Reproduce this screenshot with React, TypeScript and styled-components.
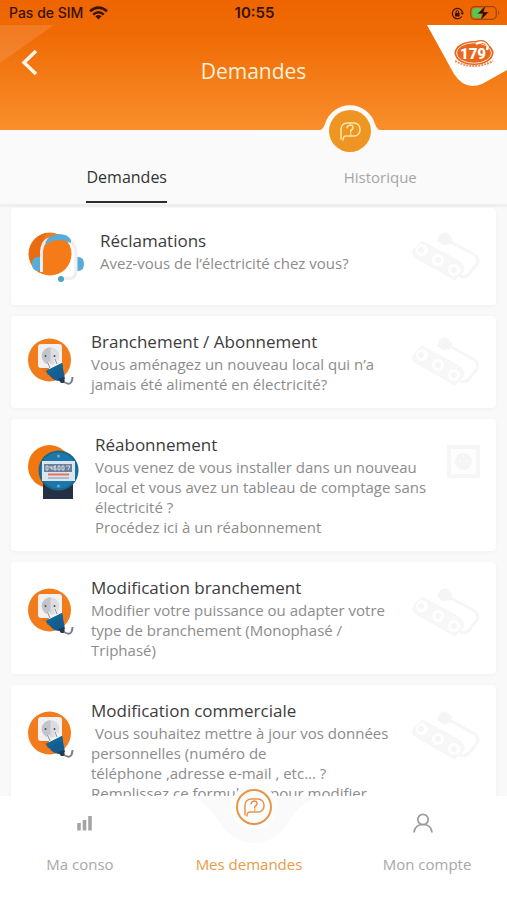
import React from "react";
import styled, { createGlobalStyle } from "styled-components";

const GlobalStyle = createGlobalStyle`
  * { box-sizing: border-box; }
  body { margin: 0; background: #f9f9f9; }
  button { font: inherit; border: 0; background: none; padding: 0; cursor: pointer; }
  svg { display: block; }
`;

const Screen = styled.div`
  display: flex;
  flex-direction: column;
  height: 100vh;
  overflow: hidden;
  color: #3c3c3c;
  font-family: "Open Sans", sans-serif;
`;

const Header = styled.header`
  position: relative;
  flex: none;
  height: 130px;
  background: linear-gradient(#ee6500 0%, #ef6a05 25%, #f98f2b 100%);
`;

const StatusBar = styled.div`
  display: grid;
  grid-template-columns: 1fr auto 1fr;
  align-items: center;
  height: 26px;
  padding: 0 7px 0 9px;
  color: #3a1204;
  font: 500 14px/26px Inter, sans-serif;
`;

const StatusGroup = styled.div<{ $end?: boolean }>`
  display: flex;
  align-items: center;
  justify-content: ${(p) => (p.$end ? "flex-end" : "flex-start")};
  gap: 6px;
`;

const Clock = styled.time`
  font-size: 15px;
  font-weight: 600;
`;

const TitleBar = styled.div`
  display: grid;
  grid-template-columns: 1fr auto 1fr;
  align-items: center;
  height: 90px;
`;

const Title = styled.h1`
  margin: 0;
  color: #fff1d8;
  font-size: 21px;
  font-weight: 400;
  line-height: 30px;
`;

const BackButton = styled.button`
  align-self: start;
  justify-self: start;
  padding: 22px 20px;
`;

const CornerLeft = styled.svg`
  position: absolute;
  left: 0;
  top: 25px;
  pointer-events: none;
`;

const CornerRight = styled.svg`
  position: absolute;
  right: 0;
  top: 25px;
`;

const Bump = styled.svg`
  position: absolute;
  left: 69%;
  bottom: -26px;
  transform: translateX(-50%);
`;

const Tabs = styled.nav`
  flex: none;
  display: grid;
  grid-template-columns: 1fr 1fr;
  justify-items: center;
  height: 77px;
  padding-top: 35px;
  background: #fafafa;
  border-bottom: 3px solid #efefef;
`;

const Tab = styled.button<{ $active?: boolean }>`
  height: 38px;
  padding-bottom: 12px;
  border-bottom: 2px solid ${(p) => (p.$active ? "#2b2b2b" : "transparent")};
  color: ${(p) => (p.$active ? "#333" : "#a6a6a6")};
  font-size: ${(p) => (p.$active ? 16 : 15)}px;
  line-height: 24px;
`;

const List = styled.main`
  flex: 1;
  min-height: 0;
  display: flex;
  flex-direction: column;
  gap: 11px;
  padding: 1px 11px 0;
  overflow: hidden;
`;

const Card = styled.article<{ $centered?: boolean; $tall?: boolean }>`
  flex: none;
  display: flex;
  align-items: ${(p) => (p.$centered ? "center" : "flex-start")};
  min-height: ${(p) => (p.$tall ? 97 : 92)}px;
  padding: ${(p) => (p.$centered ? 0 : 26)}px 16px 0 17px;
  border-radius: 4px;
  background: #fff;
  box-shadow: 0 1px 4px rgba(0, 0, 0, 0.04);
`;

const CardText = styled.div<{ $centered?: boolean; $tall?: boolean }>`
  flex: 1;
  align-self: flex-start;
  margin-top: ${(p) => (p.$centered ? 0 : -26)}px;
  padding: ${(p) => (p.$tall ? 21 : 14)}px 0 14px 16px;
`;

const CardTitle = styled.h2`
  margin: 0;
  font-size: 17px;
  font-weight: 400;
  line-height: 24px;
`;

const CardBody = styled.p`
  margin: 0;
  color: #8c8c8c;
  font-size: 15px;
  line-height: 20px;
  white-space: pre;
`;

const NavBar = styled.nav`
  position: relative;
  flex: none;
  display: grid;
  grid-template-columns: repeat(3, 1fr);
  height: 104px;
  background: #fff;
`;

const NavDip = styled.svg`
  position: absolute;
  left: 50%;
  bottom: 54px;
  transform: translateX(-50%);
`;

const NavItem = styled.button<{ $active?: boolean; $side: "left" | "right" }>`
  position: relative;
  display: flex;
  flex-direction: column;
  align-items: center;
  color: ${(p) => (p.$active ? "#ea9a48" : "#a8a8a8")};
  font-size: 15px;
  line-height: 20px;

  span {
    padding-${(p) => (p.$side === "left" ? "right" : "left")}: 9px;
  }
`;

const NavIcon = styled.div`
  display: flex;
  align-items: center;
  justify-content: center;
  height: 58px;
  padding-bottom: 4px;
`;

const Bubble = ({ color }: { color: string }) => (
  <g fill="none" stroke={color} strokeWidth="1.5" strokeLinecap="round" strokeLinejoin="round">
    <path d="M-9 8V-2a6 6 0 0 1 6-6H4a6 6 0 0 1 6 6V-1a6 6 0 0 1-6 6H-4Q-7 5-7 9" />
    <path d="M-3-3.2Q-2-6 .6-6 3.400-5.600 3-3 2.600-1.400.8-.6V1M.8 3v.2" />
  </g>
);

const Wifi = () => (
  <svg width="19" height="14" viewBox="0 0 19 14" aria-label="Wi-Fi">
    <g fill="none" stroke="#3a1204" strokeWidth="2.5">
      <path d="M1 5.2Q9.5-2 18 5.2" />
      <path d="M4.2 8.600Q9.5 4 14.800 8.600" />
    </g>
    <path d="M6.4 10.3Q9.5 7.8 12.6 10.3L9.5 13.5z" fill="#3a1204" />
  </svg>
);

const RotationLock = () => (
  <svg width="13" height="13" viewBox="0 0 13 13" aria-label="Rotation verrouillée">
    <path d="M10.8 9.5A5.2 5.2 0 1 1 11.5 5" fill="none" stroke="#3a1204" strokeWidth="1.2" />
    <path d="M9.5 5.4H13L11.3 8z" fill="#3a1204" />
    <rect x="4" y="6" width="4.6" height="3.5" rx=".5" fill="#3a1204" />
    <path d="M5 6V5a1.3 1.3 0 0 1 2.6 0v1" fill="none" stroke="#3a1204" />
  </svg>
);

const Battery = () => (
  <svg width="30" height="16" viewBox="0 0 30 16" aria-label="Batterie en charge">
    <rect x=".7" y="1.7" width="25.6" height="12.6" rx="4" fill="none" stroke="#9a4812" strokeWidth="1.2" />
    <path d="M5 3.2H11V12.8H5Q2.3 12.8 2.3 10V6Q2.3 3.2 5 3.2z" fill="#4fca58" />
    <path d="M28 5.5q2 2.5 0 5z" fill="#9a4812" />
    <path d="M15.8.5L7.5 8.8H12.7L10.4 15.5L18.8 7H13.6z" fill="#2b0c02" stroke="#ee6900" strokeWidth=".4" />
  </svg>
);

const Headset = () => (
  <svg width="56" height="50" viewBox="0 0 56 50" aria-hidden="true">
    <circle cx="22" cy="22" r="21.5" fill="#f47b18" />
    <path d="M8 38A21.5 21.5 0 0 1 19 .8Q9 16 12 41z" fill="#e96c12" />
    <path d="M12 25H10Q4 25 4 32T10 39H12zM48 25H50Q56 25 56 32T50 39H48z" fill="#58add8" />
    <path d="M13.5 40V20Q14 10 21 7M42 9Q48 13 48 22V39Q48 46.5 41 46.5H34" fill="none" stroke="#f1edf2" strokeWidth="3" />
    <path d="M17 11Q20 3 31 2 40 2 43 8V11Q37 8 31 8 24 8 19 12z" fill="#58add8" />
    <circle cx="33" cy="47" r="3" fill="#48a6bd" />
  </svg>
);

const Outlet = () => (
  <svg width="47" height="49" viewBox="0 0 47 49" aria-hidden="true">
    <circle cx="21.5" cy="22" r="21.5" fill="#f27c1b" />
    <path d="M10 28L34 28 35 39 27 42z" fill="#dc6813" opacity=".4" />
    <rect x="10" y="6" width="24" height="24" rx="3" fill="#f2f0f1" />
    <circle cx="22.5" cy="18" r="8.800" fill="#dcdde1" />
    <path d="M22.5 9.200a8.800 8.800 0 0 0 0 17.600z" fill="#c2c4ca" />
    <path d="M17.5 17v2M26.5 17v2" stroke="#505761" strokeWidth="1.600" />
    <path d="M20 24L23 32M27 21L30 29" stroke="#f3f3f5" strokeWidth="2.800" />
    <path d="M19.500 24L22 30M27 21L29 26" stroke="#8b9098" />
    <path d="M18 33L34 25 37 41 30 43Q25 42 22 38z" fill="#155c91" />
    <path d="M18 33L34 25 35 29 20 37z" fill="#0f6798" />
    <path d="M30 41L36 39 37 45 33 45z" fill="#253b51" />
    <path d="M36 44Q44 49 44.500 39" fill="none" stroke="#777f88" strokeWidth="2" />
  </svg>
);

const Meter = () => (
  <svg width="51" height="55" viewBox="0 0 51 55" aria-hidden="true">
    <circle cx="21.500" cy="21.500" r="21.500" fill="#f3770f" />
    <rect x="15" y="34" width="30" height="20" fill="#243044" />
    <circle cx="30.500" cy="25.500" r="20" fill="#19668f" />
    <circle cx="30.500" cy="25.500" r="18" fill="#1c78a8" />
    <path d="M14 16H47V36H14z" fill="#d9e5f0" />
    <rect x="16" y="19" width="28" height="8" fill="#6b8098" />
    <path d="M18 21v4h2v-4zM22 21v2h2v2M24 21v2M26 21h2l-2 2h2v2h-2zM30 21h2v4h-2zM34 21h2v4h-2zM38 21h4l-2 4" fill="none" stroke="#dbe4ee" strokeWidth=".9" />
    <path d="M20 29.500H41" stroke="#e7735e" strokeWidth="2" />
    <path d="M20 33H41" stroke="#a2adbb" strokeWidth="1.500" />
    <circle cx="30.500" cy="11" r="1.500" fill="#6db0ce" />
    <circle cx="30.500" cy="41" r="1.500" fill="#6db0ce" />
  </svg>
);

const PowerStrip = () => (
  <svg width="68" height="50" viewBox="0 0 68 50" aria-hidden="true">
    <path d="M10 9L47 29Q54 34 51 40L43 48 4 26Q-1 22 2 17z" fill="#f7f7f7" stroke="#f6f6f6" strokeLinejoin="round" />
    <g fill="#fefefe">
      <circle cx="10" cy="18" r="6" />
      <circle cx="26" cy="28" r="6" />
      <circle cx="42" cy="38" r="6" />
    </g>
    <g fill="#f6f6f6">
      <circle cx="9" cy="18" r="3" />
      <circle cx="26" cy="28" r="3" />
      <circle cx="42" cy="38" r="3" />
    </g>
    <path d="M28 2L34 0 40 6 39 12 31 13 25 9z" fill="#f5f5f5" />
    <path d="M39 10L61 22Q68 26 65 32L57 42Q54 46 48 44" fill="none" stroke="#f6f6f6" strokeWidth="3" />
  </svg>
);

const WallSocket = () => (
  <svg width="33" height="33" viewBox="0 0 33 33" aria-hidden="true">
    <rect x="2" y="2" width="29" height="29" fill="#fdfdfd" stroke="#f6f6f6" strokeWidth="4" />
    <circle cx="16.500" cy="16.500" r="8.500" fill="#f5f5f5" />
    <path d="M13 15v3M20 15v3M16.500 10v3" stroke="#fbfbfb" strokeWidth="1.500" />
  </svg>
);

type Request = {
  title: string;
  body: string;
  Icon: React.FC;
  Mark: React.FC;
  centered?: boolean;
  tall?: boolean;
};

const requests: Request[] = [
  { title: "Réclamations", body: "Avez-vous de l’électricité chez vous?", Icon: Headset, Mark: PowerStrip, centered: true, tall: true },
  { title: "Branchement / Abonnement", body: "Vous aménagez un nouveau local qui n’a\njamais été alimenté en électricité?", Icon: Outlet, Mark: PowerStrip, centered: true },
  { title: "Réabonnement", body: "Vous venez de vous installer dans un nouveau\nlocal et vous avez un tableau de comptage sans\nélectricité ?\nProcédez ici à un réabonnement", Icon: Meter, Mark: WallSocket },
  { title: "Modification branchement", body: "Modifier votre puissance ou adapter votre\ntype de branchement (Monophasé /\nTriphasé)", Icon: Outlet, Mark: PowerStrip },
  { title: "Modification commerciale", body: " Vous souhaitez mettre à jour vos données\npersonnelles (numéro de\ntéléphone ,adresse e-mail , etc... ?\nRemplissez ce formulaire pour modifier", Icon: Outlet, Mark: PowerStrip },
];

export default function App() {
  return (
    <Screen>
      <GlobalStyle />
      <Header>
        <CornerLeft width="54" height="38" viewBox="0 0 54 38" aria-hidden="true">
          <path d="M0 0H54L0 38z" fill="#fff" opacity=".12" />
        </CornerLeft>
        <StatusBar>
          <StatusGroup>
            <span>Pas de SIM</span>
            <Wifi />
          </StatusGroup>
          <Clock>10:55</Clock>
          <StatusGroup $end>
            <RotationLock />
            <Battery />
          </StatusGroup>
        </StatusBar>
        <TitleBar>
          <BackButton aria-label="Retour">
            <svg width="19" height="28" viewBox="0 0 19 28">
              <path d="M16 3L4 14.500 16 26" fill="none" stroke="#fff7ea" strokeWidth="3.500" />
            </svg>
          </BackButton>
          <Title>Demandes</Title>
        </TitleBar>
        <CornerRight width="80" height="62" viewBox="0 0 80 62" role="img" aria-label="179">
          <path d="M0 0H80V45L55 59Q38 66 27 49z" fill="#fff" />
          <ellipse cx="47" cy="28" rx="19.500" ry="12" fill="#e8671c" />
          <ellipse cx="47" cy="28" rx="17.500" ry="10.200" fill="none" stroke="#fff" strokeWidth=".8" />
          <path d="M49 19Q57 14 61 20L60 25" fill="none" stroke="#fff" strokeWidth="2.500" />
          <path d="M48 17Q58 13 62 21" fill="none" stroke="#e8671c" strokeWidth="1.200" />
          <path d="M28 36Q47 46 66 36" fill="none" stroke="#e9905f" strokeWidth="2" strokeDasharray="2 1" />
          <text x="46" y="34" textAnchor="middle" fill="#fff" fontFamily="Roboto, sans-serif" fontSize="15" fontWeight="900">179</text>
        </CornerRight>
        <Bump width="64" height="52" viewBox="0 0 64 52" aria-hidden="true">
          <path d="M0 27Q5 26 7 20A26 26 0 0 1 57 20Q59 26 64 27H0z" fill="#fafafa" />
          <circle cx="32" cy="27" r="21" fill="#ef9622" />
          <g transform="translate(32 27)"><Bubble color="#ffe6a8" /></g>
        </Bump>
      </Header>
      <Tabs>
        <Tab $active>Demandes</Tab>
        <Tab>Historique</Tab>
      </Tabs>
      <List>
        {requests.map(({ title, body, Icon, Mark, centered, tall }) => (
          <Card key={title} $centered={centered} $tall={tall}>
            <Icon />
            <CardText $centered={centered} $tall={tall}>
              <CardTitle>{title}</CardTitle>
              <CardBody>{body}</CardBody>
            </CardText>
            <Mark />
          </Card>
        ))}
      </List>
      <NavBar>
        <NavDip width="150" height="74" viewBox="0 0 150 74" aria-hidden="true">
          <path d="M7 24Q27 28 39 48Q53 71 75 71T111 48Q123 28 143 24z" fill="#fafafa" />
          <circle cx="75" cy="35" r="23" fill="#fdfdfd" />
          <circle cx="75" cy="35" r="17" fill="none" stroke="#e8954a" strokeWidth="2" />
          <g transform="translate(75 35)"><Bubble color="#e8954a" /></g>
        </NavDip>
        <NavItem $side="left">
          <NavIcon>
            <svg width="15" height="16" viewBox="0 0 15 16">
              <path d="M2 8V15.500M7.500 5V15.500M13 1V15.500" stroke="#a3a3a3" strokeWidth="3.500" />
            </svg>
          </NavIcon>
          <span>Ma conso</span>
        </NavItem>
        <NavItem $active $side="left">
          <NavIcon />
          <span>Mes demandes</span>
        </NavItem>
        <NavItem $side="right">
          <NavIcon>
            <svg width="20" height="20" viewBox="0 0 20 20" fill="none" stroke="#9b9b9b" strokeWidth="1.700">
              <circle cx="10" cy="6.500" r="5.200" />
              <path d="M1 19.500Q2 11.500 10 11.500T19 19.500" />
            </svg>
          </NavIcon>
          <span>Mon compte</span>
        </NavItem>
      </NavBar>
    </Screen>
  );
}
